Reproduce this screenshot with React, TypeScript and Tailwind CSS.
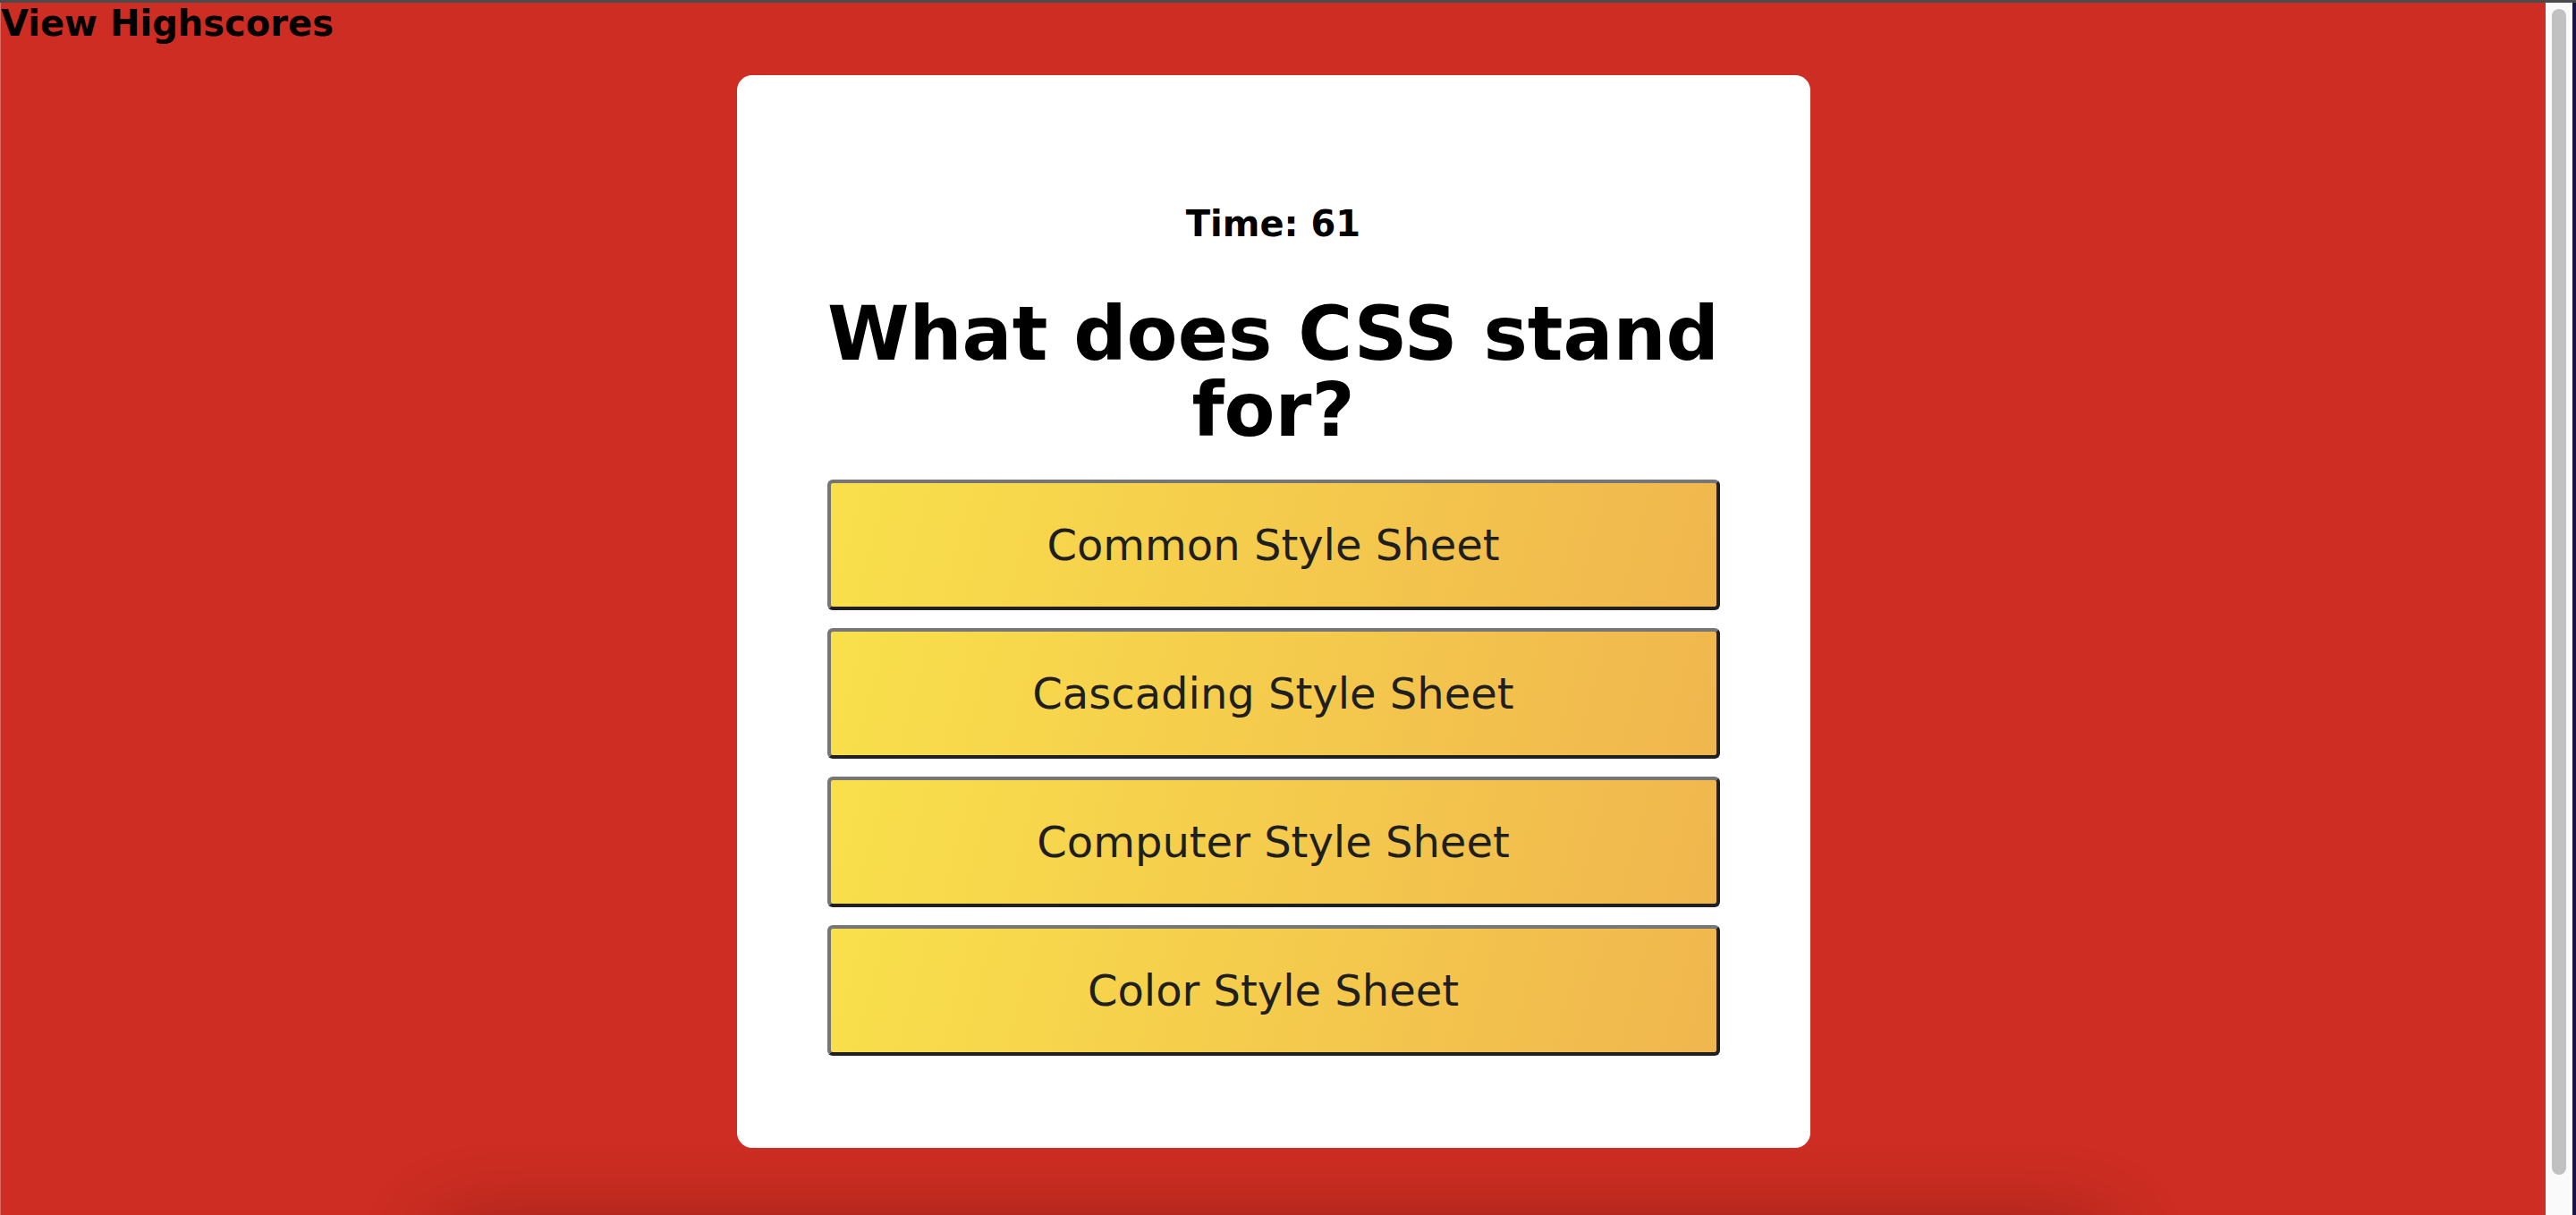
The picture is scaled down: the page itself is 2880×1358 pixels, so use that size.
import React from "react";

const answers = [
  "Common Style Sheet",
  "Cascading Style Sheet",
  "Computer Style Sheet",
  "Color Style Sheet",
];

export default function App() {
  return (
    <div className="h-[1358px] w-full flex flex-col overflow-hidden font-['DejaVu_Sans',Verdana,sans-serif] text-black">
      <div className="h-[3px] shrink-0 bg-[#4b4b4b]" />
      <div className="flex flex-1 min-h-0">
        <main className="flex-1 min-w-0 flex flex-col overflow-hidden bg-[#cd2d22] border-l border-[#dc6a62]">
          <h2 className="text-[40px] font-bold leading-[47px] shrink-0">View Highscores</h2>
          <section className="mx-auto mt-[34px] w-[1200px] shrink-0 rounded-[17px] bg-white px-[101px] pt-[143px] pb-[103px] flex flex-col items-center">
            <p className="text-[40px] font-bold leading-[47px]">Time: 61</p>
            <h1 className="-mx-[12px] mt-[57px] text-center text-[83px] font-bold leading-[85px]">
              What does CSS stand for?
            </h1>
            <div className="mt-[35px] flex w-full flex-col gap-[20px]">
              {answers.map((a) => (
                <button
                  key={a}
                  className="flex h-[146px] w-full items-center justify-center rounded-[6px] border-4 border-t-[#767676] border-l-[#767676] border-b-[#202020] border-r-[#202020] bg-[linear-gradient(105deg,#f9e04b,#f0b64e)] text-[48px] text-[#1f1f1f]"
                >
                  {a}
                </button>
              ))}
            </div>
          </section>
          <div className="mx-auto mt-[120px] h-[200px] w-[1800px] shrink-0 bg-[#cd2d22] shadow-[0_0_90px_30px_rgba(0,0,0,0.3)]" />
        </main>
        <div className="flex w-[30px] shrink-0 justify-center bg-[#fafafa] pt-[7px]">
          <div className="h-[1303px] w-[16px] rounded-full bg-[#c1c1c1]" />
        </div>
        <div className="w-[4px] shrink-0 bg-[#1b1248]" />
      </div>
    </div>
  );
}
